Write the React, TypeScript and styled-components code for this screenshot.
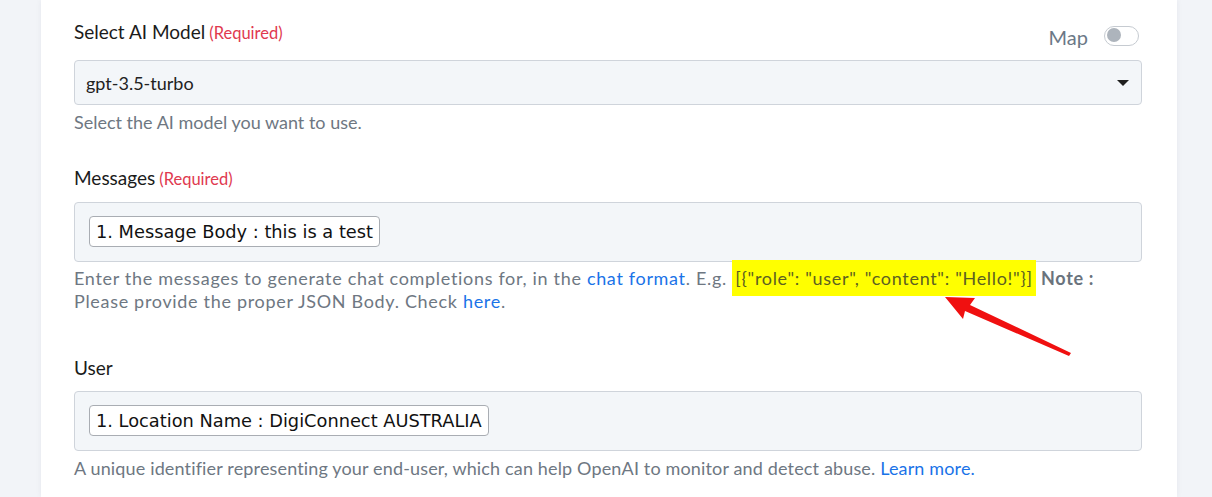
import styled, { createGlobalStyle } from "styled-components";

const GlobalStyle = createGlobalStyle`
    body {
        margin: 0;
        background: #f2f4f8;
        font-family: "Lato", "Open Sans", sans-serif;
    }
`

const Page = styled.div`
    position: relative;
    width: 1212px;
    height: 497px;
    overflow: hidden;
`

const Card = styled.div`
    margin-left: 41px;
    width: 1136px;
    min-height: 497px;
    box-sizing: border-box;
    background: #ffffff;
    box-shadow: 0 0 6px rgba(30, 40, 60, 0.06);
    padding: 20px 35px 0 33px;
`

const Field = styled.div<{ $extra?: number }>`
    margin-bottom: ${props => 32 + (props.$extra || 0)}px;
`

const LabelRow = styled.div`
    display: flex;
    justify-content: space-between;
    align-items: flex-start;
    margin-bottom: 11px;
`

const Label = styled.div`
    font-size: 19px;
    line-height: 24px;
    color: #1b1b1b;
`

const Required = styled.span`
    font-size: 16.5px;
    color: #e0394f;
    margin-left: 4px;
`

const MapToggle = styled.div`
    display: flex;
    align-items: center;
    gap: 16px;
    margin-top: 5px;
    height: 24px;
    margin-right: 3px;
    color: #6b7886;
    font-size: 20px;
`

const Switch = styled.span`
    position: relative;
    display: inline-block;
    width: 35px;
    height: 20px;
    box-sizing: border-box;
    border: 1.5px solid #c6cbd1;
    border-radius: 10px;
    background: #ffffff;
    margin-top: -3px;

    &::after {
        content: "";
        position: absolute;
        left: 2px;
        top: 1.5px;
        width: 14px;
        height: 14px;
        border-radius: 50%;
        background: #adb4bc;
    }
`

const SelectBox = styled.div`
    display: flex;
    align-items: center;
    justify-content: space-between;
    height: 45px;
    box-sizing: border-box;
    padding: 0 12px 0 11px;
    background: #f3f6f9;
    border: 1px solid #cfd4db;
    border-radius: 4px;
    font-size: 18px;
    color: #222;
`

const Caret = styled.span`
    width: 0;
    height: 0;
    border-left: 6px solid transparent;
    border-right: 6px solid transparent;
    border-top: 6px solid #1f1f1f;
`

const TokenBox = styled.div`
    display: flex;
    align-items: center;
    gap: 8px;
    height: 60px;
    box-sizing: border-box;
    padding: 0 14px 2px;
    background: #f3f6f9;
    border: 1px solid #cfd4db;
    border-radius: 4px;
`

const Token = styled.span`
    display: inline-flex;
    align-items: center;
    height: 31px;
    box-sizing: border-box;
    padding: 0 6px;
    background: #ffffff;
    border: 1px solid #a9adb3;
    border-radius: 4px;
    font-family: "DejaVu Sans", Verdana, sans-serif;
    font-size: 17.8px;
    color: #111;
    white-space: nowrap;
`

const Help = styled.div<{ $top?: number; $spacing?: number }>`
    margin-top: ${props => props.$top ?? 6}px;
    font-size: 18px;
    line-height: 23px;
    letter-spacing: ${props => props.$spacing ?? 0}px;
    color: #6e7782;
`

const Link = styled.a`
    color: #1a73e8;
    text-decoration: none;
`

const Highlight = styled.span`
    background: #ffff00;
    color: #5c5f22;
    padding: 7px 3px 7px;
`

const Bold = styled.b`
    font-weight: 700;
    color: #6a737d;
`

const Overlay = styled.svg`
    position: absolute;
    left: 0;
    top: 0;
    pointer-events: none;
`

const App = () => {
    return (
        <Page>
            <GlobalStyle />
            <Card>
                <Field>
                    <LabelRow>
                        <Label>Select AI Model<Required>(Required)</Required></Label>
                        <MapToggle>
                            Map
                            <Switch />
                        </MapToggle>
                    </LabelRow>
                    <SelectBox>
                        gpt-3.5-turbo
                        <Caret />
                    </SelectBox>
                    <Help>Select the AI model you want to use.</Help>
                </Field>

                <Field $extra={11}>
                    <LabelRow>
                        <Label>Messages<Required>(Required)</Required></Label>
                    </LabelRow>
                    <TokenBox>
                        <Token>1. Message Body : this is a test</Token>
                    </TokenBox>
                    <Help $top={5} $spacing={0.68}>
                        Enter the messages to generate chat completions for, in the <Link href="#">chat format</Link>. E.g.{" "}
                        <Highlight>[{'{'}"role": "user", "content": "Hello!"{'}'}]</Highlight> <Bold>Note :</Bold>{" "}
                        Please provide the proper JSON Body. Check <Link href="#">here</Link>.
                    </Help>
                </Field>

                <Field>
                    <LabelRow>
                        <Label>User</Label>
                    </LabelRow>
                    <TokenBox>
                        <Token>1. Location Name : DigiConnect AUSTRALIA</Token>
                    </TokenBox>
                    <Help $spacing={0.15}>
                        A unique identifier representing your end-user, which can help OpenAI to monitor and detect abuse. <Link href="#">Learn more.</Link>
                    </Help>
                </Field>
            </Card>

            {/* red annotation arrow */}
            <Overlay width="1212" height="497" viewBox="0 0 1212 497">
                <polygon
                    points="945,297 975,298 970,305 1071,353 1069,356 965,311 963,319"
                    fill="#f01010"
                />
            </Overlay>
        </Page>
    )
}

export default App;
